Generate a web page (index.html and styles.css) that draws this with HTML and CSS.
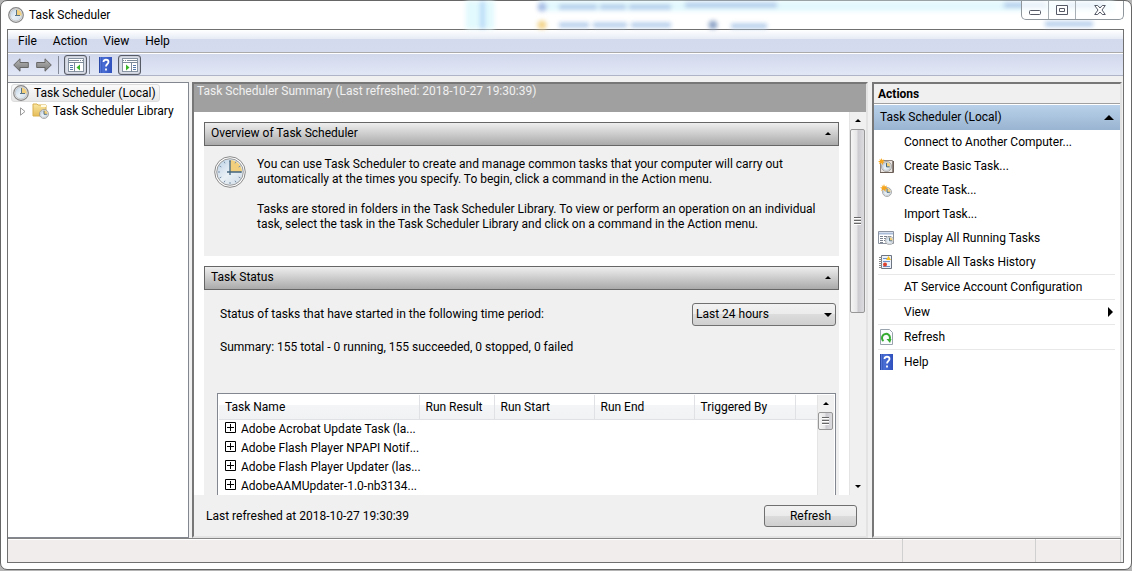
FILE: index.html
```html
<!DOCTYPE html>
<html lang="en">
<head>
<meta charset="utf-8">
<title>Task Scheduler</title>
<link rel="stylesheet" href="styles.css">
</head>
<body>
<svg class="defs" width="0" height="0" aria-hidden="true">
  <defs>
    <linearGradient id="face" x1="0" y1="0" x2="1" y2="1"><stop offset="0" stop-color="#b9cfe4"/><stop offset=".5" stop-color="#e9f0f6"/><stop offset="1" stop-color="#cfdbe6"/></linearGradient>
    <linearGradient id="steel" x1="0" y1="0" x2="0" y2="1"><stop offset="0" stop-color="#b8b8b8"/><stop offset="1" stop-color="#777"/></linearGradient>
    <linearGradient id="blue" x1="0" y1="0" x2="1" y2="0"><stop offset="0" stop-color="#2442a0"/><stop offset=".3" stop-color="#4a6fd6"/><stop offset="1" stop-color="#2f50bd"/></linearGradient>
    <linearGradient id="folder" x1="0" y1="0" x2="0" y2="1"><stop offset="0" stop-color="#f9e6a2"/><stop offset="1" stop-color="#e6bd58"/></linearGradient>
    <symbol id="clock" viewBox="0 0 32 32">
      <circle cx="16" cy="16" r="15.3" fill="#fff" stroke="#888" stroke-width="1"/>
      <circle cx="16" cy="16" r="13.3" fill="url(#face)" stroke="#999" stroke-width="1"/>
      <path d="M16 16V4a12 12 0 0 1 12 12z" fill="#f2cf7c"/>
      <path d="M16 4v2M16 26v2M4 16h2M26 16h2M10 5.600l1 1.700M21 24.700l1 1.700M5.600 10l1.700 1M24.700 21l1.700 1M10 26.400l1-1.700M22 5.600l-1 1.700M5.600 22l1.700-1M26.400 10l-1.700 1" stroke="#7c92a8" stroke-width="1"/>
      <path d="M16 4.500V19M13 16h14.500" stroke="#44657f" stroke-width="1.300" fill="none"/>
    </symbol>
    <symbol id="bigclock" viewBox="0 0 16 16">
      <circle cx="8" cy="8" r="7.300" fill="#eee" stroke="#858585" stroke-width="1.200"/>
      <circle cx="8" cy="8" r="5.900" fill="url(#face)" stroke="#b5b5b5" stroke-width=".6"/>
      <path d="M8 8.500V2.500A5.700 5.700 0 0 1 13.700 8.500z" fill="#f2cf7c"/>
      <path d="M8.500 3v6M7 8.500h5" stroke="#5b7486" fill="none"/>
    </symbol>
    <symbol id="miniclock" viewBox="0 0 16 16">
      <circle cx="8" cy="8" r="7.200" fill="#eef3f8" stroke="#7d7d7d"/>
      <circle cx="8" cy="8" r="5.800" fill="url(#face)" stroke="#aaa" stroke-width=".6"/>
      <path d="M8 8V2.500A5.500 5.500 0 0 1 13.500 8z" fill="#f4cf78"/>
      <path d="M8 3v5.500h4.500" stroke="#31566f" stroke-width="1.300" fill="none"/>
    </symbol>
    <symbol id="arrow" viewBox="0 0 16 14">
      <path d="M.7 7L7 .8v3.700h8.300v5H7v3.700z" fill="url(#steel)" stroke="#666" stroke-linejoin="round"/>
    </symbol>
    <symbol id="help" viewBox="0 0 13 16">
      <rect width="13" height="16" fill="url(#blue)"/>
      <path d="M1.500 0v16" stroke="#5878d8"/>
      <path d="M4.500 5c0-3 5-3 5 0 0 2-2.500 2-2.500 4.500M7 11.500v2" stroke="#fff" stroke-width="1.800" fill="none"/>
    </symbol>
    <symbol id="pane" viewBox="0 0 16 14">
      <rect x=".5" y=".5" width="15" height="13" fill="#fff" stroke="#8894a2"/>
      <path d="M1 2.500h10M12 2.500h1M14 2.500h1M0 4.500h16M6.500 5v9" stroke="#7c8998"/>
      <path d="M2 7.500h3M2 9.500h3M2 11.500h3" stroke="#5578ab"/>
      <path d="M12 6.500v6L8.500 9.500z" fill="#38b526"/>
    </symbol>
    <symbol id="star" viewBox="0 0 10 10">
      <path d="M5 0l1 3 3-1-1.500 2.500L10 6 7 6.500 7 10 4.500 7 1.500 9 2.500 6 0 4.500 3 4 2 1l2 2z" fill="#f5a51d"/>
    </symbol>
    <symbol id="up" viewBox="0 0 8 4"><path d="M0 4L4 0l4 4z" fill="currentColor"/></symbol>
    <symbol id="down" viewBox="0 0 8 4"><path d="M0 0h8L4 4z" fill="currentColor"/></symbol>
    <symbol id="plus" viewBox="0 0 11 11"><path d="M.5.5h10v10H.5zM2 5.500h7M5.500 2v7" fill="none" stroke="#000"/></symbol>
  </defs>
</svg>

<main class="window">
  <header class="titlebar">
    <svg class="glass" width="720" height="28" aria-hidden="true">
      <path d="M62 0h28v29H62z" fill="#e2f9fd"/><path d="M76 0h5v29h-5z" fill="#bcdcf8"/>
      <path d="M135 3h140M275 3h310M585 3h125" stroke="#e2f8fd" stroke-width="14"/>
      <circle cx="138" cy="6" r="4.500" fill="#a9bfe6"/><circle cx="138" cy="24" r="4.500" fill="#f3d48b"/><circle cx="309" cy="24" r="4.500" fill="#8fa5c7"/>
      <path d="M155 6h38m3 0h26m3 0h42M155 24h30m4 0h34m4 0h40M281 4h92M327 25h36M600 4h42M662 4h38M641 23h48" stroke="#b4cdeb" stroke-width="5"/>
    </svg>
    <svg class="app-icon" width="16" height="16"><use href="#bigclock"/></svg>
    <h1 class="title">Task Scheduler</h1>
    <div class="caption">
      <button class="cap" aria-label="Minimize"><svg width="12" height="5"><rect x=".5" y=".5" width="11" height="4" rx="1" fill="#fff" stroke="#555a66"/></svg></button>
      <button class="cap" aria-label="Maximize"><svg width="12" height="10"><path d="M.5.5h11v9H.5zM3.500 3.500h5v3h-5z" fill="#fff" stroke="#555a66"/></svg></button>
      <button class="cap cap-close" aria-label="Close"><svg width="12" height="10"><path d="M.7.5h3L6 3 8.300.5h3L8 5l3.300 4.500h-3L6 7 3.700 9.500h-3L4 5z" fill="#fff" stroke="#555a66"/></svg></button>
    </div>
  </header>

  <div class="client">
    <nav class="menubar">
      <button class="menu">File</button><button class="menu">Action</button><button class="menu">View</button><button class="menu">Help</button>
    </nav>
    <div class="toolbar">
      <button class="tool" aria-label="Back"><svg width="16" height="14"><use href="#arrow"/></svg></button>
      <button class="tool" aria-label="Forward"><svg class="flip" width="16" height="14"><use href="#arrow"/></svg></button>
      <span class="divider"></span>
      <button class="tool pressed" aria-label="Show or hide console tree"><svg width="16" height="14"><use href="#pane"/></svg></button>
      <span class="divider"></span>
      <button class="tool tool-help" aria-label="Help"><svg width="13" height="16"><use href="#help"/></svg></button>
      <button class="tool pressed" aria-label="Show or hide action pane"><svg class="flip" width="16" height="14"><use href="#pane"/></svg></button>
    </div>

    <div class="panes">
      <aside class="tree">
        <ul class="tree-list">
          <li class="root"><a class="node selected" href="#root"><svg width="16" height="16"><use href="#bigclock"/></svg>Task Scheduler (Local)</a></li>
          <li class="child">
            <svg width="6" height="9"><path d="M.5.8v7.400L5 4.500z" fill="#fff" stroke="#999"/></svg>
            <a class="node" href="#library"><svg width="17" height="16"><path d="M1 1h4l1 1h8v11H1z" fill="url(#folder)" stroke="#d9b04f"/><path d="M9 2h5v2H9z" fill="#fffbe5"/><use href="#miniclock" x="7" y="6" width="10" height="10"/></svg>Task Scheduler Library</a>
          </li>
        </ul>
      </aside>

      <section class="summary">
        <h2 class="summary-title">Task Scheduler Summary (Last refreshed: 2018-10-27 19:30:39)</h2>
        <div class="scroller">
          <div class="content">
            <section>
              <h3 class="bar">Overview of Task Scheduler<button class="collapse" aria-label="Collapse overview"><svg width="6" height="3"><use href="#up"/></svg></button></h3>
              <div class="overview">
                <svg width="32" height="32"><use href="#clock"/></svg>
                <div class="prose">
                  <p>You can use Task Scheduler to create and manage common tasks that your computer will carry out<br>automatically at the times you specify. To begin, click a command in the Action menu.</p>
                  <p>Tasks are stored in folders in the Task Scheduler Library. To view or perform an operation on an individual<br>task, select the task in the Task Scheduler Library and click on a command in the Action menu.</p>
                </div>
              </div>
            </section>
            <section>
              <h3 class="bar">Task Status<button class="collapse" aria-label="Collapse task status"><svg width="6" height="3"><use href="#up"/></svg></button></h3>
              <div class="status">
                <div class="period">
                  <label for="period">Status of tasks that have started in the following time period:</label>
                  <span class="drop"><select id="period"><option>Last 24 hours</option></select><svg width="8" height="4"><use href="#down"/></svg></span>
                </div>
                <p class="totals">Summary: 155 total - 0 running, 155 succeeded, 0 stopped, 0 failed</p>
                <div class="grid">
                  <table class="tasks">
                    <colgroup><col class="c-name"><col class="c-result"><col class="c-time"><col class="c-time"><col class="c-trigger"><col></colgroup>
                    <thead><tr><th>Task Name</th><th>Run Result</th><th>Run Start</th><th>Run End</th><th>Triggered By</th><th></th></tr></thead>
                    <tbody>
                      <tr><td><button class="expand" aria-label="Expand"><svg width="11" height="11"><use href="#plus"/></svg></button>Adobe Acrobat Update Task (la...</td><td></td><td></td><td></td><td></td><td></td></tr>
                      <tr><td><button class="expand" aria-label="Expand"><svg width="11" height="11"><use href="#plus"/></svg></button>Adobe Flash Player NPAPI Notif...</td><td></td><td></td><td></td><td></td><td></td></tr>
                      <tr><td><button class="expand" aria-label="Expand"><svg width="11" height="11"><use href="#plus"/></svg></button>Adobe Flash Player Updater (las...</td><td></td><td></td><td></td><td></td><td></td></tr>
                      <tr><td><button class="expand" aria-label="Expand"><svg width="11" height="11"><use href="#plus"/></svg></button>AdobeAAMUpdater-1.0-nb3134...</td><td></td><td></td><td></td><td></td><td></td></tr>
                    </tbody>
                  </table>
                  <div class="track"><span class="tip"><svg width="6" height="3"><use href="#up"/></svg></span><span class="thumb thumb-short"><i class="grip"></i></span></div>
                </div>
              </div>
            </section>
          </div>
          <div class="track"><span class="tip"><svg width="6" height="3"><use href="#up"/></svg></span><span class="thumb"><i class="grip"></i></span><span class="rest"></span><span class="tip"><svg width="6" height="3"><use href="#down"/></svg></span></div>
        </div>
        <footer class="summary-foot"><span>Last refreshed at 2018-10-27 19:30:39</span><button class="push">Refresh</button></footer>
      </section>

      <aside class="actions">
        <h2 class="actions-title">Actions</h2>
        <button class="group">Task Scheduler (Local)<svg width="10" height="5"><use href="#up"/></svg></button>
        <ul class="action-list">
          <li><a href="#connect"><span class="ico"></span>Connect to Another Computer...</a></li>
          <li><a href="#basic"><span class="ico"><svg width="16" height="16"><path d="M2.500 2.500h12v12h-12z" fill="#e9e4df" stroke="#8e8580"/><path d="M2 14.500h13.500V3" stroke="#6b5f58" fill="none"/><use href="#miniclock" x="3" y="3" width="11" height="11"/><use href="#star" width="7" height="7"/></svg></span>Create Basic Task...</a></li>
          <li><a href="#create"><span class="ico"><svg width="16" height="16"><use href="#miniclock" x="4" y="5" width="10" height="10"/><use href="#star" x="2" y="2" width="8" height="8"/></svg></span>Create Task...</a></li>
          <li><a href="#import"><span class="ico"></span>Import Task...</a></li>
          <li><a href="#running"><span class="ico"><svg width="16" height="16"><path d="M.5 1.500h15v12H.5z" fill="#fff" stroke="#8b93a0"/><path d="M1 3.500h14" stroke="#a9bdd8" stroke-width="2"/><path d="M2 6.500h3m1 0h3m1 0h3M2 8.500h3m1 0h2M2 10.500h3m1 0h1M2 12.500h3" stroke="#77808c"/><use href="#miniclock" x="7" y="6" width="9" height="9"/></svg></span>Display All Running Tasks</a></li>
          <li><a href="#history"><span class="ico"><svg width="16" height="16"><path d="M3.500 1.500h10v13h-10z" fill="#edf2fa" stroke="#6d7482"/><path d="M1 3.500h3M1 5.500h3M1 7.500h3M1 9.500h3M1 11.500h3M1 13.500h3" stroke="#888"/><path d="M5 4.500h4M5 7.500h7M5 12.500h7" stroke="#6c91cb"/><path d="M8 6l2.500-4L13 6z" fill="#f5bf22"/><circle cx="7" cy="10.500" r="2" fill="#dc3f2d"/></svg></span>Disable All Tasks History</a></li>
          <li class="ruled"><a href="#at"><span class="ico"></span>AT Service Account Configuration</a></li>
          <li class="ruled"><a href="#view"><span class="ico"></span>View<svg class="more" width="5" height="10"><path d="M0 0v10l5-5z"/></svg></a></li>
          <li class="ruled"><a href="#refresh"><span class="ico"><svg width="16" height="16"><path d="M2.500.5h9l3 3v12h-12z" fill="#fafcff" stroke="#99a3ad"/><path d="M5.500 12A4 4 0 1 1 11 11.500" stroke="#35ac31" stroke-width="2" fill="none"/><path d="M8.500 10h5l-1.500 4z" fill="#35ac31"/></svg></span>Refresh</a></li>
          <li class="ruled"><a href="#help-topics"><span class="ico"><svg width="13" height="16"><use href="#help"/></svg></span>Help</a></li>
        </ul>
      </aside>
    </div>

    <footer class="statusbar"><span></span><span></span><span></span></footer>
  </div>
</main>
</body>
</html>
```
FILE: styles.css
```css
* { box-sizing: border-box; }
body {
  margin: 0;
  background: #b4b4b4;
  color: #000;
  font: 12px/15px Roboto, "Open Sans", sans-serif;
}
h1, h2, h3, p, ul { margin: 0; padding: 0; font: inherit; list-style: none; }
button, select { margin: 0; padding: 0; border: 0; background: none; color: inherit; font: inherit; }
a { color: inherit; text-decoration: none; }
svg { flex: none; display: block; }
.defs { position: absolute; }
.flip { transform: scaleX(-1); }

.window {
  display: flex;
  flex-direction: column;
  height: calc(100vh - 1px);
  padding: 0 7px 6px 6px;
  border: 1px solid #666;
  border-radius: 7px;
  background: #fff;
}
.titlebar { position: relative; display: flex; align-items: center; gap: 5px; height: 28px; padding-left: 1px; }
.glass { position: absolute; right: 0; top: 0; filter: blur(2px); overflow: hidden; }
.app-icon { position: relative; }
.title { position: relative; flex: 1; }
.caption {
  position: relative;
  display: flex;
  align-self: flex-start;
  height: 19px;
  border: 1px solid #8f979d;
  border-top: 0;
  border-radius: 0 0 5px 5px;
  background: #ffffffb0;
}
.cap { display: flex; align-items: center; justify-content: center; width: 27px; border-right: 1px solid #a8b0b5; }
.cap:first-child { padding-top: 5px; }
.cap-close { width: 47px; border: 0; }

.client { flex: 1; min-height: 0; display: flex; flex-direction: column; border: 1px solid #707070; background: #f0f0f0; }
.menubar {
  display: flex;
  flex: none;
  height: 23px;
  padding: 0 2px;
  border-bottom: 1px solid #aaa;
  background: linear-gradient(#fff, #e6ebf5 9px, #d4daed 9px, #d5dbee);
}
.menu { padding: 0 8px; }
.toolbar {
  display: flex;
  flex: none;
  align-items: center;
  height: 23px;
  padding-left: 5px;
  border-top: 1px solid #fff;
  border-bottom: 1px solid #b0b4c8;
  background: linear-gradient(#d2d8ec, #e2e7f6);
}
.tool { display: flex; align-items: center; justify-content: center; width: 16px; height: 20px; }
.tool + .tool { margin-left: 7px; }
.tool.pressed { width: 23px; border: 1px solid #565b66; border-radius: 3px; background: #d9dde8; box-shadow: inset 0 0 1px #555; }
.tool-help { width: 13px; margin-left: 9px; }
.tool-help + .tool.pressed { margin-left: 6px; }
.divider { width: 1px; height: 18px; margin: 0 5px 0 6px; background: #858b99; }
.pressed + .divider { margin: 0 0 0 2px; }

.panes {
  flex: 1;
  min-height: 0;
  display: grid;
  grid-template: minmax(0, 1fr) / 181px minmax(0, 1fr) 251px;
  column-gap: 4px;
  padding-top: 6px;
}
.tree { border: 1px solid #828790; border-left: 0; background: #fff; padding: 1px 3px; }
.root, .child { display: flex; align-items: center; }
.node { display: flex; align-items: center; gap: 4px; height: 18px; padding: 0 3px 0 1px; white-space: nowrap; }
.selected { gap: 5px; border: 1px solid #ddd; border-radius: 3px; background: linear-gradient(#fafafa, #e8e8e8); }
.child { gap: 5px; padding-left: 9px; }

.summary { display: flex; flex-direction: column; margin-left: -1px; border: 2px solid #777; border-right-color: #e3e3e3; border-bottom-color: #e3e3e3; }
.summary-title { flex: none; height: 28px; padding: 0 3px; background: #a0a0a0; color: #f0f0f0; }
.scroller { flex: 1; min-height: 0; display: flex; overflow: hidden; background: #fff; }
.content { flex: 1; min-width: 0; display: flex; flex-direction: column; gap: 10px; padding: 10px 10px 0; }
.bar {
  display: flex;
  align-items: center;
  justify-content: space-between;
  height: 24px;
  padding: 0 7px 2px 6px;
  border: 1px solid #666;
  background: linear-gradient(#eee, #aaa);
}
.overview { display: flex; align-items: flex-start; gap: 11px; height: 110px; padding: 10px; background: #f0f0f0; white-space: nowrap; }
.prose { display: flex; flex-direction: column; gap: 15px; padding-top: 1px; }
.status { padding: 13px 3px 0 13px; background: #f0f0f0; }
.period { display: flex; align-items: center; justify-content: space-between; padding-left: 3px; }
.drop { position: relative; }
.drop select {
  display: block;
  appearance: none;
  width: 144px;
  height: 23px;
  padding-left: 3px;
  border: 1px solid #707070;
  border-radius: 3px;
  background: linear-gradient(#f2f2f2, #ebebeb 50%, #dcdcdc 50%, #cfcfcf);
}
.drop svg { position: absolute; right: 4px; top: 10px; pointer-events: none; }
.totals { padding: 14px 3px 38px; }
.grid { display: flex; height: 160px; padding: 1px; border: 1px solid #828790; background: #fff; }
.tasks { flex: 1; align-self: flex-start; width: 100%; min-width: 0; table-layout: fixed; border-collapse: collapse; }
.c-name { width: 200px; }
.c-result { width: 75px; }
.c-time { width: 100px; }
.c-trigger { width: 101px; }
.tasks th { height: 24px; padding: 1px 0 0 6px; border: solid #dfe1e5; border-width: 0 1px 1px 0; background: linear-gradient(#fff 40%, #f4f5f7 40%, #f1f2f4); font-weight: 400; text-align: left; white-space: nowrap; }
.tasks th:last-child { border-right: 0; }
.tasks td { height: 19px; padding: 1px 0 0 6px; white-space: nowrap; }
.expand { display: inline-block; margin-right: 5px; }

.track { flex: none; display: flex; flex-direction: column; width: 17px; background: #f0f0f0; border-left: 1px solid #e4e4e4; }
.tip { display: flex; align-items: center; justify-content: center; height: 17px; }
.thumb { display: flex; align-items: center; justify-content: center; width: 15px; height: 184px; border: 1px solid #979797; border-radius: 2px; background: linear-gradient(90deg, #f5f5f5, #e6e6e8 45%, #cbcbd0 55%, #dcdcdf); }
.thumb-short { height: 18px; }
.grip { width: 7px; height: 8px; background: repeating-linear-gradient(#666 0 1px, #fff 1px 2px, #ccc 2px 3px); }
.rest { flex: 1; }
.summary-foot { flex: none; display: flex; align-items: center; justify-content: space-between; height: 41px; padding: 1px 9px 0 12px; }
.push { width: 93px; height: 22px; border: 1px solid #707070; border-radius: 3px; background: linear-gradient(#f2f2f2, #ebebeb 50%, #dcdcdc 50%, #cfcfcf); }

.actions { border: 2px solid #777; border-right-color: #e3e3e3; border-bottom-color: #e3e3e3; margin-right: 1px; background: #fff; }
.actions-title { height: 20px; padding: 3px 4px; border-bottom: 1px solid #a0a0a0; background: #f0f0f0; font-weight: 700; }
.group { display: flex; align-items: center; justify-content: space-between; width: 100%; height: 25px; margin-top: 1px; padding: 0 6px; background: linear-gradient(#b9d1ea, #99b4d1); }
.action-list { padding: 0 5px 0 4px; }
.action-list a { display: flex; align-items: center; gap: 10px; height: 24px; }
.ico { display: flex; justify-content: center; width: 16px; }
.ruled { border-top: 1px solid #e8e8e8; }
.more { margin-left: auto; margin-right: 2px; }

.statusbar { flex: none; display: grid; grid-template-columns: 1fr 133px 85px; height: 24px; margin-right: 2px; border-top: 1px solid #858585; box-shadow: inset 0 1px #fff; background: #f0edec; }
.statusbar span { border-right: 1px solid #d0d0d0; }
```
